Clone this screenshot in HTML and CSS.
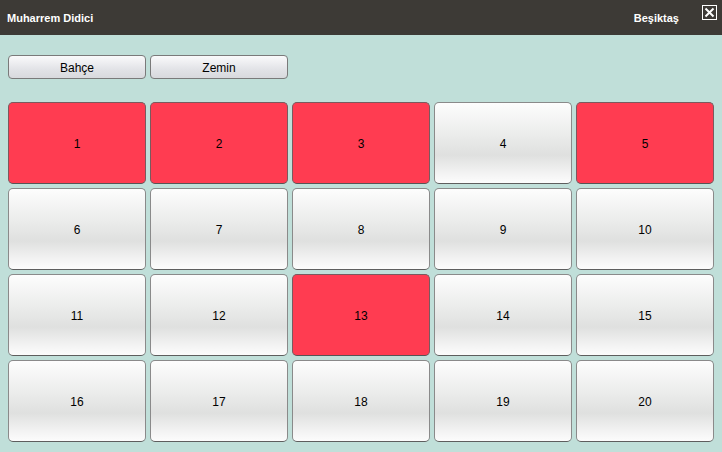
FILE: index.html
```html
<!DOCTYPE html>
<html>
<head>
<meta charset="utf-8">
<link rel="stylesheet" href="styles.css">
</head>
<body>
<div class="header">
  <span class="title">Muharrem Didici</span>
  <span class="spacer"></span>
  <span class="place">Beşiktaş</span>
  <span class="close"><svg width="11" height="11" viewBox="0 0 11 11"><path d="M1.5 1.5L9.5 9.5M9.5 1.5L1.5 9.5" stroke="#fff" stroke-width="2"/></svg></span>
</div>
<div class="toolbar">
  <button class="tab">Bahçe</button>
  <button class="tab">Zemin</button>
</div>
<div class="grid">
  <div class="tile busy">1</div>
  <div class="tile busy">2</div>
  <div class="tile busy">3</div>
  <div class="tile">4</div>
  <div class="tile busy">5</div>
  <div class="tile">6</div>
  <div class="tile">7</div>
  <div class="tile">8</div>
  <div class="tile">9</div>
  <div class="tile">10</div>
  <div class="tile">11</div>
  <div class="tile">12</div>
  <div class="tile busy">13</div>
  <div class="tile">14</div>
  <div class="tile">15</div>
  <div class="tile">16</div>
  <div class="tile">17</div>
  <div class="tile">18</div>
  <div class="tile">19</div>
  <div class="tile">20</div>
</div>
</body>
</html>
```
FILE: styles.css
```css
html, body {
  margin: 0;
  padding: 0;
  background: #c0dfd9;
  font-family: "Liberation Sans", Arial, sans-serif;
  width: 722px;
  height: 452px;
  overflow: hidden;
}
.header {
  height: 35px;
  background: #3d3a36;
  display: flex;
  align-items: center;
  padding: 0 5px 0 7px;
  color: #fff;
  font-size: 11px;
  font-weight: bold;
}
.spacer { flex: 1; }
.place { margin-right: 23px; }
.close {
  width: 13px;
  height: 13px;
  border: 1px solid #fff;
  display: flex;
  align-items: center;
  justify-content: center;
  align-self: flex-start;
  margin-top: 5px;
}
.close svg { display: block; }
.toolbar {
  display: flex;
  gap: 4px;
  padding: 20px 8px 0 8px;
}
.tab {
  width: 138px;
  height: 24px;
  margin: 0;
  padding: 1px 0 0 0;
  border: 1px solid #7a7a7a;
  border-radius: 4px;
  background: linear-gradient(#fafafb, #e2e3e7 60%, #d8d9dd);
  font-family: "Liberation Sans", Arial, sans-serif;
  font-size: 12px;
  color: #000;
}
.grid {
  display: grid;
  grid-template-columns: repeat(5, 138px);
  grid-auto-rows: 82px;
  gap: 4px;
  padding: 23px 8px 0 8px;
}
.tile {
  box-sizing: border-box;
  padding-top: 2px;
  border: 1px solid #8a8a8a;
  border-bottom-color: #5e5e5e;
  border-radius: 5px;
  background: linear-gradient(#fdfdfd, #ebeceb 40%, #dfe0df 65%, #f3f3f3 88%, #fcfcfc);
  display: flex;
  align-items: center;
  justify-content: center;
  font-size: 12px;
  color: #000;
}
.tile.busy {
  background: #ff3c51;
  border-color: #7a5a5e;
  border-bottom-color: #555;
}
```
